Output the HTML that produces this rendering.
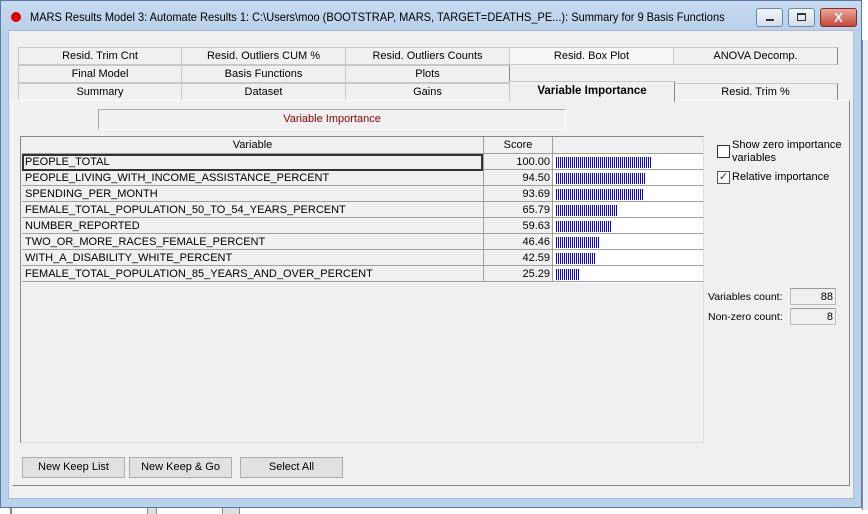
<!DOCTYPE html>
<html><head><style>
*{margin:0;padding:0;box-sizing:border-box}
body{width:868px;height:514px;background:#fff;position:relative;overflow:hidden;font-family:"Liberation Sans",sans-serif;font-size:11px;color:#000}
.a{position:absolute}
.win{left:0;top:0;width:862px;height:508px;background:#b9d1ea;border:1px solid #5a7aa0}
.client{left:8px;top:30px;width:846px;height:469px;background:#f0f0f0;border:1px solid #a8bcd4}
.tab{position:absolute;height:18px;border:1px solid #c8c8c8;border-right:1px solid #888;background:#f0f0f0;text-align:center;font-size:11px;line-height:17px}
.bar{position:absolute;height:11px;background:repeating-linear-gradient(90deg,#0000ff 0 1px,#fff 1px 2px)}
.row{position:absolute;left:22px;width:681px;height:16px;border-bottom:1px solid #a0a0a0;font-size:11px;line-height:16px}
.row .n{position:absolute;left:3px}
.row .s{position:absolute;left:461px;width:70px;height:16px;border-left:1px solid #a0a0a0;border-right:1px solid #a0a0a0;text-align:right;padding-right:2px}
.btn{position:absolute;top:457px;height:21px;width:103px;background:#e1e1e1;border:1px solid #adadad;text-align:center;font-size:11px;line-height:19px}
.cb{position:absolute;left:717px;width:13px;height:13px;border:1px solid #333;background:#fff}
.cnt{position:absolute;left:790px;width:46px;height:17px;border:1px solid #bbb;border-top-color:#999;background:#f0f0f0;text-align:right;padding-right:2px;font-size:11px;line-height:16px}
</style></head><body>
<div class="a win"></div>
<div class="a" style="left:1px;top:1px;width:860px;height:28px;background:linear-gradient(#c7dbf0,#b9d1ea)"></div>
<div class="a" style="left:11px;top:12px;width:10px;height:10px;border-radius:50%;background:#e00000"></div>
<div class="a" style="left:30px;top:10px;font-size:12px;white-space:nowrap;transform:scaleX(0.92);transform-origin:0 0">MARS Results Model 3: Automate Results 1: C:\Users\moo (BOOTSTRAP, MARS, TARGET=DEATHS_PE...): Summary for 9 Basis Functions</div>
<div class="a" style="left:756px;top:8px;width:27px;height:19px;border:1px solid #6d87a8;border-radius:3px;background:linear-gradient(#f2f6fb,#d2deec)"><div class="a" style="left:9px;top:10px;width:8px;height:2px;background:#333"></div></div>
<div class="a" style="left:788px;top:8px;width:27px;height:19px;border:1px solid #6d87a8;border-radius:3px;background:linear-gradient(#f2f6fb,#d2deec)"><div class="a" style="left:8px;top:4px;width:9px;height:8px;border:2px solid #333;border-width:2px 1px 1px 1px"></div></div>
<div class="a" style="left:820px;top:8px;width:37px;height:19px;border:1px solid #8a2a20;border-radius:3px;background:linear-gradient(#e9a99c,#c6463a);color:#fff;font-weight:bold;text-align:center;line-height:17px;font-size:13px">X</div>
<div class="a client"></div>

<div class="tab" style="left:18px;top:47px;width:164px">Resid. Trim Cnt</div>
<div class="tab" style="left:181px;top:47px;width:165px">Resid. Outliers CUM %</div>
<div class="tab" style="left:345px;top:47px;width:165px">Resid. Outliers Counts</div>
<div class="tab" style="left:509px;top:47px;width:165px;background:#f8f8f8">Resid. Box Plot</div>
<div class="tab" style="left:673px;top:47px;width:165px">ANOVA Decomp.</div>
<div class="tab" style="left:18px;top:65px;width:164px">Final Model</div>
<div class="tab" style="left:181px;top:65px;width:165px">Basis Functions</div>
<div class="tab" style="left:345px;top:65px;width:165px">Plots</div>
<div class="tab" style="left:18px;top:83px;width:164px">Summary</div>
<div class="tab" style="left:181px;top:83px;width:165px">Dataset</div>
<div class="tab" style="left:345px;top:83px;width:165px">Gains</div>
<div class="tab" style="left:673px;top:83px;width:165px">Resid. Trim %</div>

<div class="a" style="left:12px;top:100px;width:838px;height:386px;border:1px solid #fff;border-right-color:#888;border-bottom-color:#888;background:#f0f0f0"></div>
<div class="tab" style="left:509px;top:81px;width:166px;height:21px;border-bottom:none;font-weight:bold;font-size:11.5px;line-height:19px;z-index:2">Variable Importance</div>

<div class="a" style="left:98px;top:109px;width:468px;height:21px;border:1px solid #aaa;border-right-color:#fff;border-bottom-color:#fff;color:#8b0000;text-align:center;line-height:19px;font-size:11px">Variable Importance</div>

<div class="a" style="left:20px;top:136px;width:684px;height:307px;border:1px solid #888;border-right-color:#ddd;border-bottom-color:#ddd;background:#f0f0f0"></div>
<div class="a" style="left:22px;top:137px;width:681px;height:17px;border-bottom:1px solid #a0a0a0;font-size:11px;line-height:16px">
<div class="a" style="left:0;width:461px;text-align:center">Variable</div>
<div class="a" style="left:461px;width:70px;height:16px;border-left:1px solid #a0a0a0;border-right:1px solid #a0a0a0;text-align:center">Score</div></div>
<div class="a" style="left:553px;top:154px;width:150px;height:129px;background:#fff"></div>
<div class="row" style="top:154px"><span class="n">PEOPLE_TOTAL</span><span class="s">100.00</span><div class="a" style="left:0;top:0;width:461px;height:17px;border:2px solid #333"></div></div>
<div class="row" style="top:170px"><span class="n">PEOPLE_LIVING_WITH_INCOME_ASSISTANCE_PERCENT</span><span class="s">94.50</span></div>
<div class="row" style="top:186px"><span class="n">SPENDING_PER_MONTH</span><span class="s">93.69</span></div>
<div class="row" style="top:202px"><span class="n">FEMALE_TOTAL_POPULATION_50_TO_54_YEARS_PERCENT</span><span class="s">65.79</span></div>
<div class="row" style="top:218px"><span class="n">NUMBER_REPORTED</span><span class="s">59.63</span></div>
<div class="row" style="top:234px"><span class="n">TWO_OR_MORE_RACES_FEMALE_PERCENT</span><span class="s">46.46</span></div>
<div class="row" style="top:250px"><span class="n">WITH_A_DISABILITY_WHITE_PERCENT</span><span class="s">42.59</span></div>
<div class="row" style="top:266px"><span class="n">FEMALE_TOTAL_POPULATION_85_YEARS_AND_OVER_PERCENT</span><span class="s">25.29</span></div>
<div class="bar" style="left:556px;top:157px;width:95px"></div>
<div class="bar" style="left:556px;top:173px;width:90px"></div>
<div class="bar" style="left:556px;top:189px;width:88px"></div>
<div class="bar" style="left:556px;top:205px;width:62px"></div>
<div class="bar" style="left:556px;top:221px;width:56px"></div>
<div class="bar" style="left:556px;top:237px;width:44px"></div>
<div class="bar" style="left:556px;top:253px;width:40px"></div>
<div class="bar" style="left:556px;top:269px;width:24px"></div>

<div class="cb" style="top:145px"></div>
<div class="a" style="left:732px;top:139px;font-size:11px;line-height:13px">Show zero importance<br>variables</div>
<div class="cb" style="top:171px;border-color:#555;color:#333;font-size:11px;line-height:11px;text-align:center">✓</div>
<div class="a" style="left:732px;top:171px;font-size:11px">Relative importance</div>
<div class="a" style="left:708px;top:291px;font-size:10.5px">Variables count:</div>
<div class="cnt" style="top:288px">88</div>
<div class="a" style="left:708px;top:311px;font-size:10.5px">Non-zero count:</div>
<div class="cnt" style="top:308px">8</div>

<div class="btn" style="left:22px">New Keep List</div>
<div class="btn" style="left:129px">New Keep &amp; Go</div>
<div class="btn" style="left:240px">Select All</div>

<div class="a" style="left:862px;top:40px;width:6px;height:470px;background:#e8eef6;border-left:1px solid #88a"></div>
<div class="a" style="left:10px;top:508px;width:2px;height:6px;background:#888"></div>
<div class="a" style="left:147px;top:508px;width:10px;height:6px;border-left:1px solid #888;border-right:1px solid #888;background:#ddd"></div>
<div class="a" style="left:222px;top:508px;width:18px;height:6px;border-left:1px solid #888;border-right:1px solid #888;background:#ddd"></div>
</body></html>
